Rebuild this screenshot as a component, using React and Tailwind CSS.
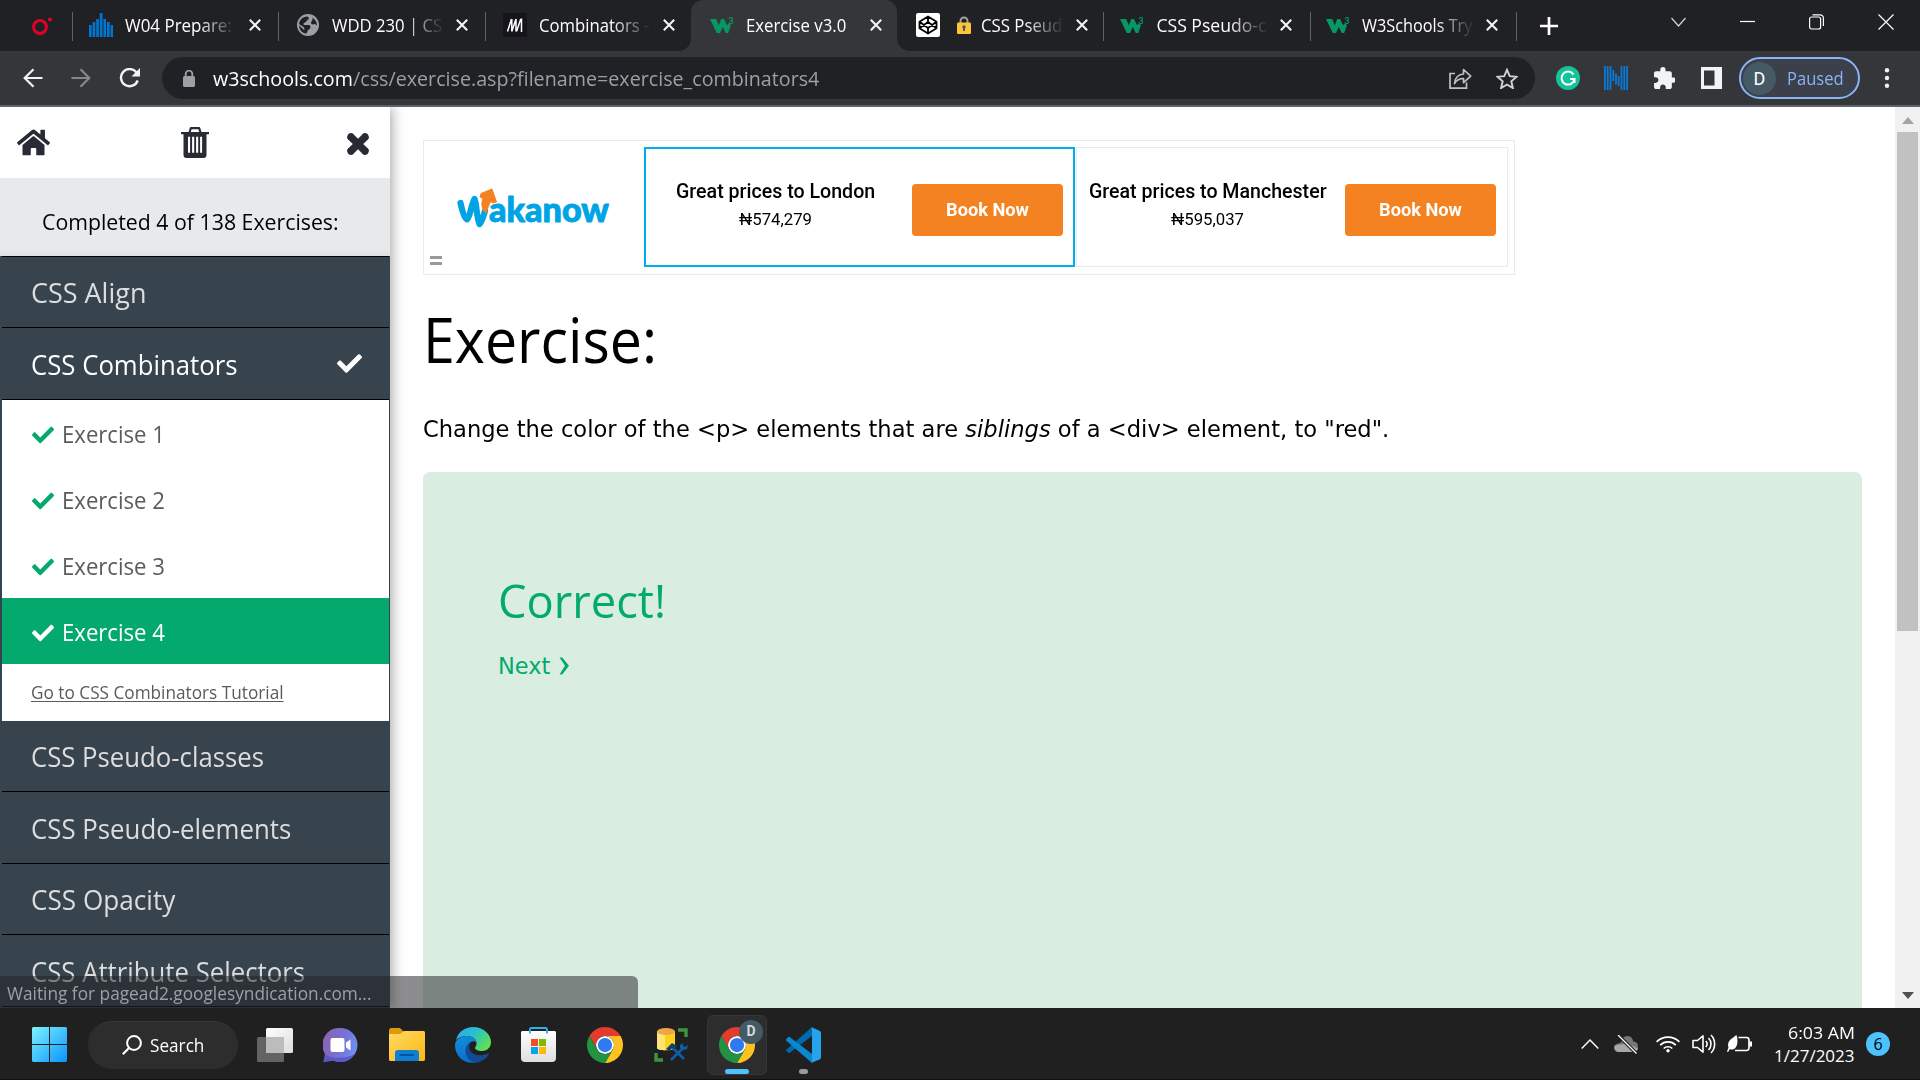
import React, { useLayoutEffect, useRef, useState } from "react";
import { FaHome, FaCheck } from "react-icons/fa";

const ui = "font-['Open_Sans','Noto_Sans',sans-serif]";

/* Single line of text squeezed or stretched to the width of its box. */
function Fit({ className = "", inkClass = "", children }) {
  const outer = useRef(null);
  const inner = useRef(null);
  const [scale, setScale] = useState(1);
  useLayoutEffect(() => {
    setScale(outer.current.offsetWidth / inner.current.offsetWidth);
  }, []);
  return (
    <span ref={outer} className={"block shrink-0 whitespace-nowrap " + className}>
      <span ref={inner} className={"inline-block origin-left align-top " + inkClass} style={{ transform: `scaleX(${scale})` }}>
        {children}
      </span>
    </span>
  );
}

/* ---------- favicons ---------- */
const W3Logo = () => (
  <svg viewBox="0 0 24 24" className="h-6 w-6 shrink-0">
    <path d="M0 6h6.200l2.600 6.500L11.200 6h2.800l3 6.200 1.500-1.700 2.500 1.500L18.200 20h-2.400l-3-6-2.900 6H6.800z" fill="#059862" />
    <text x="18.600" y="11" fontFamily="Roboto, sans-serif" fontSize="9" fontWeight="500" fill="#059862">3</text>
  </svg>
);
const Bars = () => (
  <svg viewBox="0 0 24 24" className="h-6 w-6 shrink-0" fill="#0076ce">
    {[[0, 12], [3.6, 9], [7.2, 6], [10.8, 0], [14.4, 6], [18, 9], [21.5, 12]].map(([x, y]) => (
      <rect key={x} x={x} y={y} width="2.700" height={24 - y} />
    ))}
  </svg>
);
const Globe = () => (
  <svg viewBox="0 0 24 24" className="h-6 w-6 shrink-0">
    <circle cx="12" cy="12" r="11" fill="#9aa0a6" />
    <path d="M11.500 3.500c2 1 1.500 2.500 0 3.500s-1 2-2.500 2.500-2 1.500-1 2.500h4.500c2 0 2.500 2 1.500 3.500s-2.500 1-2.500 2.500-1 2.500-2 2.500C6 20 3.200 16.500 3 12.500L8 17c1 0 .5-2-.5-3s-3-1.500-4.500-3C3.500 6.500 7 3.500 11.500 3.500zM16 4.500c3 1.500 5 4.500 5 8l-2-1.500-2.500.5c-1.500-.5-2-2-1-3s1.500-2.500.5-4z" fill="#202124" />
  </svg>
);
const Mdn = () => (
  <svg viewBox="0 0 24 24" className="h-6 w-6 shrink-0">
    <rect width="24" height="24" fill="#15141a" />
    <path d="M4.500 18.500L8.500 6M8.800 18.500V6M8.800 18.500L13 6M13 18.500V6M13.500 18.500L17.800 6M18.500 5.500v13.500" stroke="#fff" strokeWidth="1.500" fill="none" />
  </svg>
);
const Codepen = () => (
  <svg viewBox="0 0 24 24" className="h-6 w-6 shrink-0">
    <rect width="24" height="24" rx="2" fill="#fff" />
    <path d="M12 3.500l8.500 5.200v6.600L12 20.500l-8.500-5.200V8.700zM12 3.500v5.500M12 15v5.500M3.500 8.700L12 15l8.500-6.300M3.500 15.300L12 9l8.500 6.300" fill="none" stroke="#000" strokeWidth="1.800" strokeLinejoin="round" />
  </svg>
);
const CloseX = () => (
  <svg viewBox="0 0 12 12" className="ml-[14px] h-3 w-3 shrink-0">
    <path d="M.8.8l10.400 10.400M11.200.8L.8 11.200" stroke="#f1f3f4" strokeWidth="2.100" />
  </svg>
);

function Tab({ icon, title, width, sep, active, locked, pad = "pl-[17px]", fade = true }) {
  return (
    <div className={"relative flex h-[51px] items-center pb-px " + pad + (active ? " rounded-t-[12px] bg-[#35363a]" : "")}>
      {sep && <span className="absolute left-0 top-3 h-[29px] w-px bg-[#5f6368]" />}
      {active && (
        <>
          <span className="absolute -left-3 bottom-0 h-3 w-3 bg-[radial-gradient(circle_at_0_0,#202124_11.5px,#35363a_12px)]" />
          <span className="absolute -right-3 bottom-0 h-3 w-3 bg-[radial-gradient(circle_at_100%_0,#202124_11.5px,#35363a_12px)]" />
        </>
      )}
      {icon}
      <div className={"ml-3 flex h-8 w-[110px] items-center overflow-hidden text-[17.600px] leading-8 text-white " + (fade ? "[mask-image:linear-gradient(90deg,#000_66%,rgba(0,0,0,.1)_98%)]" : "")}>
        {locked && (
          <svg viewBox="0 0 14 18" className="ml-[5px] mr-[10px] h-[18px] w-[14px] shrink-0">
            <path d="M3.500 9V5a3.500 3.500 0 017 0v4" fill="none" stroke="#a3a29f" strokeWidth="2" />
            <rect y="6.500" width="14" height="11.500" rx="1.300" fill="#fcc636" />
            <circle cx="7" cy="11" r="1.700" fill="#4d4d66" />
            <rect x="6.100" y="11" width="1.800" height="4" fill="#4d4d66" />
          </svg>
        )}
        <Fit className={width}>{title}</Fit>
      </div>
      <CloseX />
    </div>
  );
}

function TabStrip() {
  return (
    <div className="flex h-[51px] bg-[#202124]">
      <div className="flex w-[72px] items-center pl-8">
        <svg viewBox="0 0 20 18" className="h-[18px] w-5">
          <ellipse cx="8" cy="10" rx="6.400" ry="6.500" fill="none" stroke="#e4002b" strokeWidth="3" />
          <circle cx="18" cy="2.500" r="2" fill="#e4002b" />
        </svg>
      </div>
      <div className="grid w-[1444px] grid-cols-7">
        <Tab sep icon={<Bars />} title="W04 Prepare:" width="w-[107px]" />
        <Tab sep pad="pl-[18px]" icon={<Globe />} title="WDD 230 | CS" width="w-[110px]" />
        <Tab sep pad="pl-[18px]" icon={<Mdn />} title="Combinators -" width="w-[110px]" />
        <Tab active pad="pl-[19px]" icon={<W3Logo />} title="Exercise v3.0" width="w-[100px]" fade={false} />
        <Tab pad="pl-[19px]" icon={<Codepen />} locked title="CSS Pseud" width="w-[81px]" />
        <Tab sep icon={<W3Logo />} title="CSS Pseudo-c" width="w-[110px]" />
        <Tab sep pad="pl-[16px]" icon={<W3Logo />} title="W3Schools Try" width="w-[110px]" />
      </div>
      <div className="mt-3 h-[29px] w-px bg-[#5f6368]" />
      <svg viewBox="0 0 18 18" className="ml-[23px] mt-[17px] h-[18px] w-[18px]">
        <path d="M9 0v18M0 9h18" stroke="#fff" strokeWidth="2.700" />
      </svg>
      <div className="ml-auto flex items-start gap-[54px] pr-[26px] pt-[14px]">
        <svg viewBox="0 0 15 16" className="h-4 w-[15px]"><path d="M.5 4l7 8 7-8" fill="none" stroke="#d5d6d8" strokeWidth="1.200" /></svg>
        <svg viewBox="0 0 15 16" className="h-4 w-[15px]"><path d="M0 7.500h15" stroke="#fff" strokeWidth="1.200" /></svg>
        <svg viewBox="0 0 15 16" className="h-4 w-[15px]" fill="none" stroke="#fff" strokeWidth="1.200"><rect x=".6" y="3" width="11" height="12" rx="2" /><path d="M3.500.8h7.500a3.400 3.400 0 013.400 3.400V12" /></svg>
        <svg viewBox="0 0 16 16" className="h-4 w-4"><path d="M.5.5l15 15M15.500.5l-15 15" stroke="#fff" strokeWidth="1.200" /></svg>
      </div>
    </div>
  );
}

function Toolbar() {
  return (
    <div className="flex h-14 items-center border-b-2 border-[#5f6368] bg-[#35363a]">
      <svg viewBox="0 0 20 20" className="ml-[23px] h-5 w-5" fill="none" stroke="#f1f3f4" strokeWidth="2.200"><path d="M19.500 10H2M10.500 1.200L1.700 10l8.800 8.800" /></svg>
      <svg viewBox="0 0 20 20" className="ml-7 h-5 w-5" fill="none" stroke="#85878a" strokeWidth="2.200"><path d="M.5 10H18M9.500 1.200L18.300 10l-8.800 8.800" /></svg>
      <svg viewBox="0 0 21 20" className="ml-7 h-5 w-[21px]" fill="none" stroke="#f1f3f4" strokeWidth="2.400"><path d="M17.500 4.500A8.600 8.600 0 1018.700 12.500" /><path d="M21 0v8.500h-8.500z" fill="#f1f3f4" stroke="none" /></svg>
      <div className="ml-[22px] flex h-[42px] w-[1373px] items-center rounded-full bg-[#202124] pl-[21px]">
        <svg viewBox="0 0 12 17" className="h-[17px] w-3"><rect y="6" width="12" height="11" rx="1.500" fill="#9aa0a6" /><path d="M2.700 7V4a3.300 3.300 0 016.600 0v3" fill="none" stroke="#9aa0a6" strokeWidth="1.800" /></svg>
        <div className="ml-[18px] flex text-[20.500px] leading-8">
          <Fit className="w-[140px] text-white">w3schools.com</Fit>
          <Fit className="w-[466px] text-[#9aa0a6]">/css/exercise.asp?filename=exercise_combinators4</Fit>
        </div>
        <svg viewBox="0 0 23 21" className="ml-auto h-[21px] w-[23px]" fill="none" stroke="#bdc1c6" strokeWidth="1.700"><path d="M6 5.500H1v14.600h16.500v-5.500" /><path d="M5.500 15.500C6 9.500 9.500 6.500 14.500 6V1.500l7.200 6.700-7.200 6.500v-4.200c-4 0-6.800 1.500-9 5z" strokeLinejoin="round" /></svg>
        <svg viewBox="0 0 22 21" className="ml-6 mr-[17px] h-[21px] w-[22px]"><path d="M11 1.800l2.700 6.400 6.900.6-5.300 4.500 1.600 6.800-5.900-3.600-5.900 3.600 1.600-6.800-5.300-4.500 6.900-.6z" fill="none" stroke="#d0d2d5" strokeWidth="1.900" /></svg>
      </div>
      <svg viewBox="0 0 24 24" className="ml-[21px] h-6 w-6"><circle cx="12" cy="12" r="12" fill="#15c39a" /><path d="M17.500 8.500A6.500 6.500 0 1018.500 13h-4.500M18.500 13v4" fill="none" stroke="#fff" strokeWidth="2" /></svg>
      <svg viewBox="0 0 24 24" className="ml-6 h-6 w-6" stroke="#0a7ad6" strokeWidth="1.800"><path d="M.9 0v24M3.700 0v24M6.500 0v24M9.300 4v11M12 7.500v11M14.700 10v10M17.500 0v24M20.300 0v24M23.100 0v24" /></svg>
      <svg viewBox="2 1 20 21" className="ml-[26px] h-[22px] w-[21px]" fill="#f1f3f4"><path d="M20.500 11H19V7c0-1.100-.9-2-2-2h-4V3.500a2.500 2.500 0 00-5 0V5H4c-1.100 0-2 .9-2 2v3.800h1.500c1.500 0 2.700 1.200 2.700 2.700S5 16.200 3.500 16.200H2V20c0 1.100.9 2 2 2h3.800v-1.500c0-1.500 1.200-2.700 2.700-2.700s2.700 1.200 2.700 2.700V22H17c1.100 0 2-.9 2-2v-4h1.500a2.500 2.500 0 000-5z" /></svg>
      <svg viewBox="0 0 21 22" className="ml-[26px] h-[22px] w-[21px]"><path fillRule="evenodd" d="M0 0h21v22H0zM3 3.500v15h10.500v-15z" fill="#f1f3f4" /></svg>
      <div className="ml-[17px] flex h-[42px] w-[121px] items-center rounded-full border-2 border-[#8ab4f8] bg-[#3c404b] pl-[2px]">
        <span className="flex h-[33px] w-[33px] items-center justify-center rounded-full bg-[#455a64] font-['Roboto',sans-serif] text-[18px] text-white">D</span>
        <Fit className="-mt-px ml-[11px] w-[57px] text-[18px] leading-8 text-[#8ab4f8]">Paused</Fit>
      </div>
      <svg viewBox="0 0 6 20" className="ml-6 h-5 w-[6px]" fill="#f1f3f4"><circle cx="3" cy="2.300" r="2.200" /><circle cx="3" cy="10" r="2.200" /><circle cx="3" cy="17.700" r="2.200" /></svg>
    </div>
  );
}

/* ---------- sidebar ---------- */
function Topic({ label, width, open, height = "h-[71px]" }) {
  return (
    <div className={"flex items-center justify-between border-b border-black pl-[29px] pr-[27px] pt-[2px] text-[26.500px] leading-9 " + height + (open ? " text-white" : " text-[#dddddd]")}>
      <Fit className={width}>{label}</Fit>
      {open && <FaCheck className="-mt-[2px] h-[25px] w-[25px]" />}
    </div>
  );
}
function Exercise({ n, active }) {
  return (
    <div className={"flex h-[66px] items-center pl-[30px] text-[23px] leading-8 " + (active ? "bg-[#04aa6d] text-white" : "text-[#5b5b5b]")}>
      <FaCheck className={"mt-[4px] h-[22px] w-[22px] " + (active ? "text-white" : "text-[#04aa6d]")} />
      <Fit className="ml-[8px] w-[103px] pt-[2px]">Exercise {n}</Fit>
    </div>
  );
}
function Sidebar() {
  return (
    <aside className="relative z-10 flex h-[901px] w-[390px] shrink-0 flex-col bg-[#38444d] shadow-[2px_0_12px_rgba(0,0,0,0.35)]">
      <div className="flex h-[71px] shrink-0 items-center bg-white pl-[17px] text-[#282a35]">
        <FaHome className="h-[33px] w-[33px]" />
        <svg viewBox="0 0 28 31" className="ml-[131px] h-[31px] w-7"><path d="M8.500 5.500l1.300-4.300h8.400l1.300 4.300" fill="none" stroke="currentColor" strokeWidth="2.200" strokeLinejoin="round" /><path fillRule="evenodd" d="M0 5h28v2.300h-2.500V28a3 3 0 01-3 3h-17a3 3 0 01-3-3V7.300H0zm7 4.800v16h2.100v-16zm4.100 0v16h2.100v-16zm4 0v16h2.100v-16zm4 0v16h2v-16z" fill="currentColor" /></svg>
        <svg viewBox="0 0 24 24" className="ml-[137px] mt-[2px] h-6 w-6"><path d="M4.300 4.300l15.400 15.400M19.700 4.300L4.300 19.700" stroke="currentColor" strokeWidth="7.400" /><path d="M4 4l16 16M20 4L4 20" stroke="currentColor" strokeWidth="5" strokeLinecap="round" /><path d="M3.300 5.500l2.200-2.200M18.500 3.300l2.200 2.200M3.300 18.500l2.200 2.200M18.500 20.700l2.200-2.200" stroke="currentColor" strokeWidth="4.500" strokeLinecap="round" /></svg>
      </div>
      <div className="h-[78px] shrink-0 bg-[#e7e9eb] bg-[linear-gradient(0deg,rgba(0,0,0,.04),transparent_8px)] pl-[42px] pt-[23px] text-[22px] leading-10 text-black">
        <Fit className="w-[297px]">Completed 4 of 138 Exercises:</Fit>
      </div>
      <div className="ml-[2px] mr-px border-t border-black">
        <Topic label="CSS Align" width="w-[115px]" />
        <Topic label="CSS Combinators" width="w-[207px]" open height="h-[72px]" />
        <div className="bg-white">
          <Exercise n={1} />
          <Exercise n={2} />
          <Exercise n={3} />
          <Exercise n={4} active />
          <div className="h-[57px] pl-[29px] pt-[12px] text-[18.500px] leading-8 text-[#5b5b5b]">
            <Fit className="w-[253px]" inkClass="underline decoration-1 underline-offset-2">Go to CSS Combinators Tutorial</Fit>
          </div>
        </div>
        <Topic label="CSS Pseudo-classes" width="w-[233px]" />
        <Topic label="CSS Pseudo-elements" width="w-[260px]" height="h-[72px]" />
        <Topic label="CSS Opacity" width="w-[144px]" />
        <Topic label="CSS Attribute Selectors" width="w-[274px]" height="h-[72px]" />
      </div>
    </aside>
  );
}

/* ---------- main page ---------- */
const Wakanow = () => (
  <svg viewBox="0 0 156 42" className="h-[42px] w-[156px]">
    <path d="M4.500 16c1.500 7 3.500 15 6.500 16.500C14 31 15.500 16 18.500 12c2 4 2.500 21 5 25 2.500-2 4-8 5.500-13" fill="none" stroke="#00a4e4" strokeWidth="6.200" strokeLinecap="round" strokeLinejoin="round" />
    <path d="M30 26c-4.500-4-5-9-3-14.500l-3-1.500 1-3.500L36 2l4.500 13-4 1-1.500-2c-2.500 4-3 7-5 12z" fill="#f58220" stroke="#f58220" strokeLinejoin="round" />
    <text x="33" y="34.500" fontFamily="Lato, sans-serif" fontWeight="900" fontSize="34" textLength="120" lengthAdjust="spacingAndGlyphs" fill="#00a4e4" stroke="#00a4e4" strokeWidth=".9" strokeLinejoin="round">akanow</text>
  </svg>
);
function Offer({ city, cityWidth, price, box, shift }) {
  return (
    <div className={"flex h-[120px] justify-between font-['Roboto',sans-serif] " + box}>
      <div className={"flex flex-1 flex-col items-center " + shift}>
        <Fit className={"mt-[31px] text-[19.500px] font-medium leading-6 text-black " + cityWidth}>Great prices to {city}</Fit>
        <Fit className="mt-[4px] w-[73px] text-[16.500px] leading-6 text-black">₦{price}</Fit>
      </div>
      <div className="mt-[35px] flex h-[52px] w-[151px] justify-center rounded-[4px] bg-[#f58220]">
        <Fit className="mt-[14px] w-[83px] text-[18px] font-bold leading-6 text-white">Book Now</Fit>
      </div>
    </div>
  );
}
function Content() {
  return (
    <main className="flex flex-1 flex-col bg-white px-[33px] pt-[33px]">
      <div className="flex h-[135px] w-[1092px] border border-[#ebebeb] pt-[6px]">
        <div className="w-[220px] pl-[6px]">
          <div className="pl-[26px] pt-[40px]"><Wakanow /></div>
          <div className="mt-[27px] h-[9px] w-3 border-y-[3px] border-[#999]" />
        </div>
        <Offer city="London" cityWidth="w-[199px]" price="574,279" shift="pr-[9px]" box="w-[431px] border-2 border-[#00adef] pl-[2px] pr-[10px]" />
        <Offer city="Manchester" cityWidth="w-[238px]" price="595,037" shift="pr-[7px]" box="ml-px w-[432px] border border-[#ebebeb] pr-[11px] pt-px" />
      </div>
      <h1 className={"mt-[21px] text-[63px] leading-[86px] text-black " + ui}>
        <Fit className="w-[234px]">Exercise:</Fit>
      </h1>
      <p className="mt-[30px] font-['DejaVu_Sans',sans-serif] text-[22.500px] leading-[34px] text-black">
        <Fit className="w-[966px]">Change the color of the &lt;p&gt; elements that are <i>siblings</i> of a &lt;div&gt; element, to "red".</Fit>
      </p>
      <section className="mt-[26px] flex-1 rounded-t-[7px] bg-[#d9eee1] pl-[75px] pt-[99px] text-[#04aa6d]">
        <h2 className={"text-[45px] leading-[60px] " + ui}><Fit className="w-[168px]">Correct!</Fit></h2>
        <div className="mt-[18px] flex items-center font-['DejaVu_Sans',sans-serif] text-[22.500px] leading-[34px]">
          <Fit className="w-[52px]">Next</Fit>
          <svg viewBox="0 0 11 18" className="ml-[9px] h-[18px] w-[11px]"><path d="M.5.5h2.700L10 8.800l-6.800 8.700H.5L6 8.800z" fill="currentColor" /></svg>
        </div>
      </section>
    </main>
  );
}
function Scrollbar() {
  return (
    <div className="flex w-[25px] shrink-0 flex-col items-center bg-[#f1f1f1]">
      <svg viewBox="0 0 12 7" className="mt-[10px] h-[7px] w-3"><path d="M0 7l6-7 6 7z" fill="#a3a3a3" /></svg>
      <div className="mt-2 h-[499px] w-[21px] bg-[#c1c1c1]" />
      <svg viewBox="0 0 12 7" className="mb-[9px] mt-auto h-[7px] w-3"><path d="M0 0l6 7 6-7z" fill="#505050" /></svg>
    </div>
  );
}

/* ---------- taskbar ---------- */
const Chrome = () => (
  <svg viewBox="0 0 48 48" className="h-9 w-9">
    <circle cx="24" cy="24" r="12" fill="#fff" />
    <path d="M24 12H44.780a24 24 0 00-41.560 0L13.610 30A11.990 11.990 0 0124 12z" fill="#e33b2e" />
    <path d="M34.390 30L24 48A24 24 0 0044.780 12H24A11.990 11.990 0 0134.390 30z" fill="#fcc31e" />
    <path d="M13.610 30L3.220 12A24 24 0 0024 48L34.390 30a11.990 11.990 0 01-20.780 0z" fill="#229342" />
    <circle cx="24" cy="24" r="9.500" fill="#2f7af0" />
  </svg>
);
const Start = () => (
  <svg viewBox="0 0 35 35" className="ml-8 h-[35px] w-[35px]">
    <defs><linearGradient id="win" x1="0" y1="0" x2="1" y2="1"><stop offset="0" stopColor="#7df3ff" /><stop offset="1" stopColor="#0a93fb" /></linearGradient></defs>
    <path d="M1 0h16v17H0V1zM18 0h16l1 1v16H18zM0 18h17v17H1l-1-1zM18 18h17v16l-1 1H18z" fill="url(#win)" />
  </svg>
);
const TaskView = () => (
  <svg viewBox="0 0 36 34" className="ml-[19px] h-[34px] w-9">
    <defs><linearGradient id="tv" x1="0" y1="0" x2="1" y2="1"><stop offset="0" stopColor="#fff" /><stop offset="1" stopColor="#dcdcdc" /></linearGradient></defs>
    <rect y="9" width="27" height="25" rx="1.500" fill="#636363" />
    <rect x="9" width="27" height="25" rx="1.500" fill="url(#tv)" />
    <rect x="9" y="9" width="18" height="16" fill="#bcbcbc" />
  </svg>
);
const Chat = () => (
  <svg viewBox="0 0 35 34" className="ml-[30px] h-[34px] w-[35px]">
    <defs><linearGradient id="ch" x1="0" y1=".2" x2="1" y2=".5"><stop offset="0" stopColor="#8a63ad" /><stop offset=".6" stopColor="#7672d6" /><stop offset="1" stopColor="#6f8ff0" /></linearGradient></defs>
    <path d="M17.500 0a17 17 0 110 34c-2.500 0-5-.5-7-1.500L.5 34l1.500-8A17 17 0 0117.500 0z" fill="url(#ch)" />
    <path d="M.5 34l1.500-8c4 4 18 6 30 0-3 5-8 8-14.500 8-2.500 0-5-.5-7-1.500z" fill="#5552c4" opacity=".8" />
    <rect x="7.500" y="10" width="14" height="14" rx="2" fill="#fff" />
    <path d="M23 14.500l4.500-3v11l-4.500-3z" fill="#fff" />
  </svg>
);
const Folder = () => (
  <svg viewBox="0 0 36 33" className="ml-[31px] h-[33px] w-9">
    <defs><linearGradient id="fo" x1="0" y1="0" x2="1" y2="1"><stop offset="0" stopColor="#ffd968" /><stop offset="1" stopColor="#fcb90f" /></linearGradient></defs>
    <path d="M0 1.500L1.500 0H11l4 4v4H0z" fill="#dd9a07" />
    <path d="M0 6h11l4-3h20l1 1v28l-1 1H1l-1-1z" fill="url(#fo)" />
    <path d="M6 33V25a3 3 0 013-3h18a3 3 0 013 3v8z" fill="#0f7fd3" />
    <rect x="10" y="26" width="15" height="2" rx="1" fill="#0a519b" />
  </svg>
);
const Edge = () => (
  <svg viewBox="0 0 36 36" className="ml-[30px] h-9 w-9">
    <defs>
      <linearGradient id="e1" x1="0" y1="0" x2="1" y2=".6"><stop offset="0" stopColor="#2da7f0" /><stop offset=".5" stopColor="#28c0cf" /><stop offset="1" stopColor="#5fe052" /></linearGradient>
      <linearGradient id="e2" x1="0" y1="0" x2=".3" y2="1"><stop offset="0" stopColor="#1490dc" /><stop offset="1" stopColor="#0a6ecb" /></linearGradient>
    </defs>
    <path d="M1 13C3 5 10 0 18 0c10.500 0 18 7.500 18 15 0 6-4.500 9-9 9-4 0-7-1.500-7-3 0-1 1.500-1.500 1.500-4.500C21.500 12 17 9 12 9 7 9 3 11 1 13z" fill="url(#e1)" />
    <path d="M0 18C.2 12.500 6 9 12 9c5 0 9.500 3.500 9.500 6.500-1.500-1.500-3.500-1.500-5.500-.5-6 3-6 17 7 20C10 38.500 0 30 0 18z" fill="url(#e2)" />
    <path d="M15 15.500c-8 5-5 18.500 6 20.300 6-1 10-4 12.800-8.300.5-1-.3-1.500-1-1-9 4.500-22 .500-17.800-11z" fill="#114b94" />
  </svg>
);
const Store = () => (
  <svg viewBox="0 0 35 35" className="ml-[30px] h-[35px] w-[35px]">
    <defs><linearGradient id="st" x1="0" y1="0" x2="0" y2="1"><stop offset="0" stopColor="#fff" /><stop offset="1" stopColor="#dedede" /></linearGradient></defs>
    <path d="M0 5l1-1h33l1 1v26a4 4 0 01-4 4H4a4 4 0 01-4-4z" fill="url(#st)" />
    <path d="M9 6.500V2.500A1.500 1.500 0 0110.500 1h14A1.500 1.500 0 0126 2.500v4" fill="none" stroke="#2cb1f0" strokeWidth="1.900" />
    <path d="M10 12h7v7h-7z" fill="#f25022" /><path d="M18 12h7v7h-7z" fill="#7fba00" />
    <path d="M10 20h7v7h-7z" fill="#00a4ef" /><path d="M18 20h7v7h-7z" fill="#ffb900" />
  </svg>
);
const Database = () => (
  <svg viewBox="0 0 34 34" className="ml-[31px] h-[34px] w-[34px]">
    <path d="M3 3v17c0 3 18 3 18 0V3z" fill="#fcd116" /><path d="M3 3v17c0 1.500 4 2.200 8 2.300V3z" fill="#ffe579" />
    <ellipse cx="12" cy="3.500" rx="9" ry="3.500" fill="#f0a54a" />
    <path d="M24 2h8v7M2 25v7h7" fill="none" stroke="#3c963f" strokeWidth="3.400" />
    <path d="M17 32l12-12M30 31L18 19" stroke="#0b5fa8" strokeWidth="2.600" />
    <path d="M12 21l6-6 5 3-3 3-2-1-2 3z" fill="#0b3f78" /><path d="M26 20v-3l3-2v3l2 1 3-2-1 4-4 1z" fill="#0b5fa8" />
  </svg>
);
const VSCode = () => (
  <svg viewBox="0 0 36 36" className="h-9 w-9">
    <path d="M1 23.500l2 2c.6.5 1.300.5 2 0L27 9V0L1 23z" fill="#0069ae" />
    <path d="M1 12.500l2-2.300c.6-.5 1.300-.5 2 0L27 27v9L1 13.500z" fill="#0a87d3" />
    <path d="M26 36l8.500-3.500A2.500 2.500 0 0036 30V6a2.500 2.500 0 00-1.500-2.300L26 0l1 2v32z" fill="#26a3ee" />
  </svg>
);

function Taskbar() {
  return (
    <div className="flex h-[72px] items-center border-b border-[#101010] bg-[#202020] pt-[2px]">
      <Start />
      <div className="ml-[21px] flex h-12 w-[150px] items-center rounded-full border-t border-[#363636] bg-[#2d2d2d] pl-[34px]">
        <svg viewBox="0 0 20 20" className="h-5 w-5"><circle cx="12" cy="8" r="6.900" fill="none" stroke="#fff" strokeWidth="2" /><path d="M7.500 12.500L.8 19.200" stroke="#fff" strokeWidth="2.200" /></svg>
        <Fit className="ml-2 w-[54px] text-[17.500px] leading-8 text-white">Search</Fit>
      </div>
      <TaskView />
      <Chat />
      <Folder />
      <Edge />
      <Store />
      <div className="ml-[31px] h-9"><Chrome /></div>
      <Database />
      <div className="relative ml-[19px] flex h-[60px] w-[60px] items-center justify-center rounded-[6px] border border-[#363636] bg-[#2d2d2d]">
        <Chrome />
        <span className="absolute left-[31px] top-[4px] flex h-6 w-6 items-center justify-center rounded-full bg-[#455a64] font-['Roboto',sans-serif] text-[14px] font-bold text-[#d5dadd]">D</span>
        <span className="absolute bottom-0 left-[17px] h-[5px] w-6 rounded-full bg-[#4cc2ff]" />
      </div>
      <div className="relative ml-[18px]">
        <VSCode />
        <span className="absolute -bottom-[11px] left-[14px] h-[5px] w-[9px] rounded-full bg-[#9a9a9a]" />
      </div>
      <div className="ml-auto flex items-center pb-px pr-[30px]">
        <svg viewBox="0 0 18 10" className="h-[10px] w-[18px]"><path d="M.7 9.500L9 1l8.300 8.500" fill="none" stroke="#fff" strokeWidth="1.400" /></svg>
        <svg viewBox="0 0 24 19" className="ml-[15px] h-[19px] w-6"><path d="M7 8c0-4 3-7 6.500-7S19 4 19 6.500c3 0 5 2 5 5s-2 5.500-5 5.500H5c-3 0-5-2-5-4.500S3.500 8 7 8z" fill="#777" /><path d="M1 10.500l12-2 11 5c-.5 2-2.500 3.500-5 3.500H5c-3.500 0-5.500-3-4-6.500z" fill="#a8a8a8" /><path d="M4 0l18.500 18.500" stroke="#202020" strokeWidth="3.500" /><path d="M4 0l18.500 18.500" stroke="#fff" strokeWidth="1.300" /></svg>
        <svg viewBox="0 0 24 18" className="ml-[18px] h-[18px] w-6" fill="none" stroke="#fff" strokeWidth="1.700"><path d="M.6 6.800a16 16 0 0122.800 0M4.200 10.200a11 11 0 0115.600 0M7.700 13.500a6.200 6.200 0 018.600 0" /><circle cx="12" cy="15.800" r="1.700" fill="#fff" stroke="none" /></svg>
        <svg viewBox="0 0 24 20" className="ml-3 h-5 w-6" fill="none" stroke="#fff" strokeWidth="1.600"><path d="M1 6.500h4.500L11 1.800v16.400l-5.500-4.700H1z" strokeLinejoin="round" /><path d="M13.800 7a4.500 4.500 0 010 6M16.500 4a8.500 8.500 0 010 12M19 1a13 13 0 010 18" /></svg>
        <svg viewBox="0 0 25 18" className="ml-[11px] h-[18px] w-[25px]"><path d="M11.500 2.500h8A2.500 2.500 0 0122 5v8a2.500 2.500 0 01-2.500 2.500H8" fill="none" stroke="#fff" strokeWidth="1.700" /><path d="M22.500 6.500H25v5h-2.500z" fill="#fff" /><path d="M9.500 0c2 6 1 13.500-4 14.500-1 0-2 0-2.500-.5L1 17l-1-.5 1.500-4C-.5 6 5 3.500 9.500 0z" fill="#fff" /></svg>
        <div className="ml-[22px] flex w-[81px] flex-col items-end text-[17px] leading-[23px] text-white">
          <Fit className="w-[67px]">6:03 AM</Fit>
          <Fit className="w-[81px]">1/27/2023</Fit>
        </div>
        <span className="ml-[11px] flex h-6 w-6 items-center justify-center rounded-full bg-[#4cc2ff] text-[16px] leading-6 text-black">6</span>
      </div>
    </div>
  );
}

export default function App() {
  return (
    <div className={"flex h-[1080px] w-[1920px] flex-col overflow-hidden bg-white " + ui}>
      <TabStrip />
      <Toolbar />
      <div className="relative flex h-[901px] shrink-0 overflow-hidden">
        <Sidebar />
        <Content />
        <Scrollbar />
        <div className="absolute bottom-0 left-0 z-20 h-8 w-[638px] rounded-tr-[6px] bg-[rgba(36,34,40,0.52)] pl-[7px] pt-px text-[17.500px] leading-8 text-[#9aa0a6]">
          <Fit className="w-[364px]">Waiting for pagead2.googlesyndication.com...</Fit>
        </div>
      </div>
      <Taskbar />
    </div>
  );
}
